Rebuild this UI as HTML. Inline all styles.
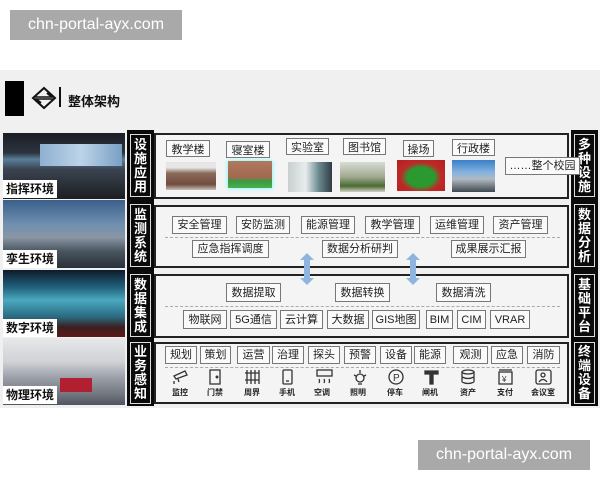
<!DOCTYPE html>
<html><head><meta charset="utf-8"><style>
*{margin:0;padding:0;box-sizing:border-box}
body{width:600px;height:480px;background:#fff;position:relative;overflow:hidden;font-family:"Liberation Sans","Noto Sans CJK SC",sans-serif}
.a{position:absolute}
.wm{position:absolute;background:#a9a9a9;color:#fff;font-size:16px;line-height:30px;text-align:center;width:172px;height:30px}
.bg{position:absolute;left:0;top:70px;width:600px;height:338px;background:#f0f0f0}
.p{position:absolute;border:2px solid #222;background:#f4f4f4}
.b{position:absolute;border:1px solid #777;background:#fafafa;font-size:11px;color:#222;text-align:center;white-space:nowrap;overflow:hidden}
.col{position:absolute;background:#0a0a0a}
.lb{position:absolute;border:1px solid #ddd;color:#fff;font-weight:bold;font-size:13px;line-height:14px;text-align:center;display:flex;flex-direction:column;justify-content:center}
.img{position:absolute}
.env{position:absolute;background:#fff;font-weight:bold;font-size:12px;color:#111;line-height:18px;padding:0 3px}
.dash{position:absolute;border-top:1px dashed #aaa;height:0}
.ic{position:absolute;font-size:8px;font-weight:bold;color:#222;text-align:center;width:30px}
.arr{position:absolute;width:14px;height:32px}
</style></head><body>
<div class="wm" style="left:10px;top:10px">chn-portal-ayx.com</div>
<div class="wm" style="left:418px;top:440px">chn-portal-ayx.com</div>
<div class="bg"></div>
<div class="a" style="left:5px;top:81px;width:19px;height:35px;background:#000"></div>
<svg class="a" style="left:31px;top:86px" width="26" height="24" viewBox="0 0 26 24"><path d="M2 12 L13 2 L24 12 L13 22 Z" fill="none" stroke="#111" stroke-width="2"/><path d="M4 11 L22 11 M4 13 L22 13" stroke="#111" stroke-width="1.5"/><path d="M16 7 L21 11 M10 17 L5 13" stroke="#111" stroke-width="2"/></svg>
<div class="a" style="left:59px;top:87px;width:2px;height:20px;background:#111"></div>
<div class="a" style="left:68px;top:91px;font-size:13px;font-weight:bold;color:#111">整体架构</div>

<div class="img" style="left:3px;top:133px;width:122px;height:66px;background:linear-gradient(180deg,#1a1d24 0%,#2c3440 30%,#5a7e9a 40%,#3a4450 55%,#1c1e22 100%)"></div>
<div class="a" style="left:40px;top:144px;width:82px;height:22px;background:linear-gradient(90deg,#8fb0d0,#bcd4e8,#7aa0c4)"></div>
<div class="env" style="left:3px;top:180px">指挥环境</div>
<div class="img" style="left:3px;top:200px;width:122px;height:68px;background:linear-gradient(180deg,#3a5f8a 0%,#6f8fb0 35%,#8a96a4 55%,#4a5660 75%,#2a3038 100%)"></div>
<div class="env" style="left:3px;top:250px">孪生环境</div>
<div class="img" style="left:3px;top:270px;width:122px;height:67px;background:linear-gradient(180deg,#0d1a2a 0%,#1f5f78 25%,#4aa8c0 45%,#2a6a80 70%,#3a2020 85%,#601818 100%)"></div>
<div class="env" style="left:3px;top:319px">数字环境</div>
<div class="img" style="left:3px;top:338px;width:122px;height:67px;background:linear-gradient(180deg,#e8e8ea 0%,#d0d2d6 35%,#9a9ea6 60%,#70747c 85%,#505460 100%)"></div>
<div class="a" style="left:60px;top:378px;width:32px;height:14px;background:#b02030"></div>
<div class="env" style="left:3px;top:386px">物理环境</div>

<div class="col" style="left:127px;top:130px;width:27px;height:276px"></div>
<div class="lb" style="left:130px;top:134px;width:21px;height:63px">设<br>施<br>应<br>用</div>
<div class="lb" style="left:130px;top:204px;width:21px;height:63px">监<br>测<br>系<br>统</div>
<div class="lb" style="left:130px;top:274px;width:21px;height:63px">数<br>据<br>集<br>成</div>
<div class="lb" style="left:130px;top:342px;width:21px;height:62px">业<br>务<br>感<br>知</div>

<div class="col" style="left:571px;top:130px;width:27px;height:276px"></div>
<div class="lb" style="left:574px;top:134px;width:21px;height:63px">多<br>种<br>设<br>施</div>
<div class="lb" style="left:574px;top:204px;width:21px;height:63px">数<br>据<br>分<br>析</div>
<div class="lb" style="left:574px;top:274px;width:21px;height:63px">基<br>础<br>平<br>台</div>
<div class="lb" style="left:574px;top:342px;width:21px;height:62px">终<br>端<br>设<br>备</div>

<div class="p" style="left:154px;top:133px;width:415px;height:66px"></div>
<div class="b" style="left:166px;top:140px;width:44px;height:17px">教学楼</div>
<div class="b" style="left:226px;top:141px;width:44px;height:17px">寝室楼</div>
<div class="b" style="left:286px;top:138px;width:43px;height:17px">实验室</div>
<div class="b" style="left:343px;top:138px;width:43px;height:17px">图书馆</div>
<div class="b" style="left:403px;top:140px;width:31px;height:17px">操场</div>
<div class="b" style="left:452px;top:139px;width:43px;height:17px">行政楼</div>
<div class="img" style="left:166px;top:162px;width:50px;height:28px;background:linear-gradient(180deg,#e6e6e6 20%,#8a6a5a 40%,#704c40 80%,#c8c0b8 100%)"></div>
<div class="img" style="left:228px;top:161px;width:44px;height:27px;background:linear-gradient(180deg,#b07860 0%,#a06a50 60%,#3a9a40 75%,#48b050 100%);box-shadow:0 0 4px #5ff"></div>
<div class="img" style="left:288px;top:162px;width:44px;height:30px;background:linear-gradient(90deg,#c8d0d0,#e8ecec 40%,#6a8a90 70%,#303c44)"></div>
<div class="img" style="left:340px;top:162px;width:45px;height:30px;background:linear-gradient(180deg,#d8dcd4,#a0a890 50%,#4a6a30 80%,#d0d0c8)"></div>
<div class="img" style="left:397px;top:160px;width:48px;height:31px;background:radial-gradient(ellipse at 50% 55%,#2a9a30 0%,#2a9a30 40%,#c02828 60%,#b02020 100%)"></div>
<div class="img" style="left:452px;top:160px;width:43px;height:32px;background:linear-gradient(180deg,#3a80c8 0%,#88b4e0 40%,#b0b8c0 60%,#404850 100%)"></div>
<div class="b" style="left:505px;top:157px;width:75px;height:18px;line-height:17px">……整个校园</div>

<div class="p" style="left:154px;top:205px;width:415px;height:63px"></div>
<div class="b" style="left:172px;top:216px;width:55px;height:18px;line-height:17px">安全管理</div>
<div class="b" style="left:236px;top:216px;width:54px;height:18px;line-height:17px">安防监测</div>
<div class="b" style="left:301px;top:216px;width:54px;height:18px;line-height:17px">能源管理</div>
<div class="b" style="left:365px;top:216px;width:55px;height:18px;line-height:17px">教学管理</div>
<div class="b" style="left:430px;top:216px;width:54px;height:18px;line-height:17px">运维管理</div>
<div class="b" style="left:493px;top:216px;width:55px;height:18px;line-height:17px">资产管理</div>
<div class="dash" style="left:165px;top:237px;width:395px"></div>
<div class="b" style="left:192px;top:240px;width:77px;height:18px;line-height:17px">应急指挥调度</div>
<div class="b" style="left:322px;top:240px;width:76px;height:18px;line-height:17px">数据分析研判</div>
<div class="b" style="left:451px;top:240px;width:75px;height:18px;line-height:17px">成果展示汇报</div>

<div class="p" style="left:154px;top:274px;width:415px;height:64px"></div>
<div class="b" style="left:226px;top:283px;width:55px;height:19px;line-height:18px">数据提取</div>
<div class="b" style="left:335px;top:283px;width:55px;height:19px;line-height:18px">数据转换</div>
<div class="b" style="left:436px;top:283px;width:55px;height:19px;line-height:18px">数据清洗</div>
<div class="dash" style="left:165px;top:306px;width:395px"></div>
<div class="b" style="left:183px;top:310px;width:44px;height:19px;line-height:18px">物联网</div>
<div class="b" style="left:230px;top:310px;width:47px;height:19px;line-height:18px">5G通信</div>
<div class="b" style="left:280px;top:310px;width:43px;height:19px;line-height:18px">云计算</div>
<div class="b" style="left:327px;top:310px;width:42px;height:19px;line-height:18px">大数据</div>
<div class="b" style="left:372px;top:310px;width:48px;height:19px;line-height:18px">GIS地图</div>
<div class="b" style="left:426px;top:310px;width:27px;height:19px;line-height:18px">BIM</div>
<div class="b" style="left:457px;top:310px;width:29px;height:19px;line-height:18px">CIM</div>
<div class="b" style="left:490px;top:310px;width:40px;height:19px;line-height:18px">VRAR</div>

<svg class="arr" style="left:300px;top:253px" viewBox="0 0 14 32"><path d="M7 0 L14 7 L10 7 L10 25 L14 25 L7 32 L0 25 L4 25 L4 7 L0 7Z" fill="#8fb4e0"/></svg>
<svg class="arr" style="left:406px;top:253px" viewBox="0 0 14 32"><path d="M7 0 L14 7 L10 7 L10 25 L14 25 L7 32 L0 25 L4 25 L4 7 L0 7Z" fill="#8fb4e0"/></svg>

<div class="p" style="left:154px;top:342px;width:415px;height:62px"></div>
<div class="b" style="left:165px;top:346px;width:32px;height:18px;line-height:17px">规划</div>
<div class="b" style="left:200px;top:346px;width:31px;height:18px;line-height:17px">策划</div>
<div class="b" style="left:237px;top:346px;width:33px;height:18px;line-height:17px">运营</div>
<div class="b" style="left:272px;top:346px;width:32px;height:18px;line-height:17px">治理</div>
<div class="b" style="left:308px;top:346px;width:32px;height:18px;line-height:17px">探头</div>
<div class="b" style="left:344px;top:346px;width:32px;height:18px;line-height:17px">预警</div>
<div class="b" style="left:380px;top:346px;width:32px;height:18px;line-height:17px">设备</div>
<div class="b" style="left:414px;top:346px;width:32px;height:18px;line-height:17px">能源</div>
<div class="b" style="left:453px;top:346px;width:35px;height:18px;line-height:17px">观测</div>
<div class="b" style="left:491px;top:346px;width:32px;height:18px;line-height:17px">应急</div>
<div class="b" style="left:527px;top:346px;width:33px;height:18px;line-height:17px">消防</div>
<div class="dash" style="left:165px;top:367px;width:395px"></div>

<svg class="a" style="left:160px;top:369px" width="400" height="16" viewBox="0 0 400 16" fill="none" stroke="#333" stroke-width="1.3">
<g transform="translate(13,0)"><path d="M1 7 L12 2 L14 6 L3 10Z M5 10 L6 13 M1 12 L1 15"/></g>
<g transform="translate(49,0)"><rect x="1" y="1" width="10" height="14"/><circle cx="8" cy="8" r="0.8"/></g>
<g transform="translate(84,0)"><path d="M1 4 H15 M1 11 H15 M3 1 V15 M7 1 V15 M11 1 V15 M15 1 V15"/></g>
<g transform="translate(122,0)"><rect x="1" y="1" width="9" height="14" rx="1"/><path d="M4 12 H7"/></g>
<g transform="translate(156,0)"><rect x="1" y="1" width="15" height="6"/><path d="M3 10 q1 2 0 4 M8 10 q1 2 0 4 M13 10 q1 2 0 4"/></g>
<g transform="translate(193,0)"><circle cx="7" cy="9" r="4"/><path d="M7 1 V4 M1 6 L3 7 M13 6 L11 7 M5 15 H9"/></g>
<g transform="translate(228,0)"><circle cx="8" cy="8" r="7"/><text x="5" y="12" font-size="10" fill="#333" stroke="none" font-family="Liberation Sans">P</text></g>
<g transform="translate(264,0)"><path d="M1 2 H14 V5 H1Z M6 5 V15 H9 V5" fill="#333"/></g>
<g transform="translate(301,0)"><ellipse cx="7" cy="3" rx="6" ry="2"/><path d="M1 3 V13 M13 3 V13 M1 8 q6 3 12 0 M1 13 q6 3 12 0"/></g>
<g transform="translate(338,0)"><rect x="1" y="3" width="13" height="12"/><path d="M1 1 H14"/><text x="4" y="13" font-size="8" fill="#333" stroke="none">¥</text></g>
<g transform="translate(375,0)"><rect x="1" y="1" width="15" height="14" rx="2"/><circle cx="8" cy="6" r="2"/><path d="M4 13 q4 -5 8 0"/></g>
</svg>
<div class="ic" style="left:165px;top:387px">监控</div>
<div class="ic" style="left:200px;top:387px">门禁</div>
<div class="ic" style="left:237px;top:387px">周界</div>
<div class="ic" style="left:272px;top:387px">手机</div>
<div class="ic" style="left:307px;top:387px">空调</div>
<div class="ic" style="left:343px;top:387px">照明</div>
<div class="ic" style="left:380px;top:387px">停车</div>
<div class="ic" style="left:415px;top:387px">闸机</div>
<div class="ic" style="left:453px;top:387px">资产</div>
<div class="ic" style="left:490px;top:387px">支付</div>
<div class="ic" style="left:528px;top:387px">会议室</div>
</body></html>
